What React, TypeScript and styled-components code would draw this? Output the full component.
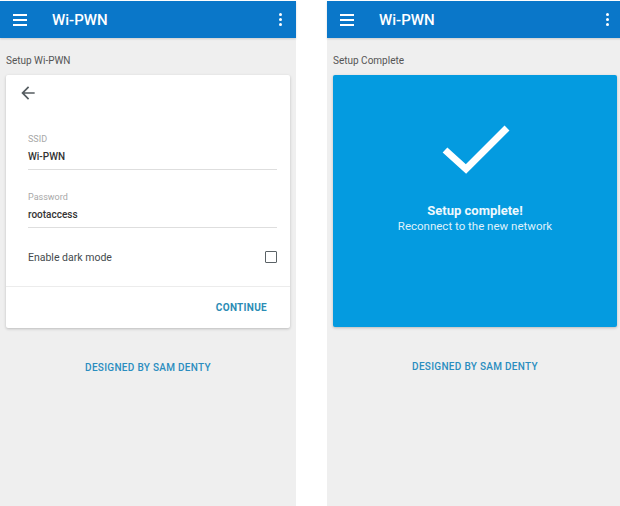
import React from 'react'
import styled, { createGlobalStyle } from 'styled-components'

const GlobalStyle = createGlobalStyle`
  html, body {
    margin: 0;
    padding: 0;
    background: #ffffff;
  }
  body {
    font-family: Roboto, 'Liberation Sans', sans-serif;
  }
`

function AppBar() {
  return (
    <Bar>
      <Hamburger>
        <span />
        <span />
        <span />
      </Hamburger>
      <BarTitle>Wi-PWN</BarTitle>
      <Kebab>
        <span />
        <span />
        <span />
      </Kebab>
    </Bar>
  )
}

function App() {
  return (
    <Screen>
      <GlobalStyle />
      <Phone>
        <AppBar />
        <Content>
          <SectionTitle>Setup Wi-PWN</SectionTitle>
          <Card>
            <BackRow>
              <svg width="20" height="20" viewBox="0 0 24 24">
                <path
                  fill="#555c60"
                  d="M20 11H7.83l5.59-5.59L12 4l-8 8 8 8 1.41-1.41L7.83 13H20v-2z"
                />
              </svg>
            </BackRow>
            <Fields>
              <Field>
                <FieldLabel>SSID</FieldLabel>
                <FieldValue>Wi-PWN</FieldValue>
              </Field>
              <Field $gap={21}>
                <FieldLabel>Password</FieldLabel>
                <FieldValue>rootaccess</FieldValue>
              </Field>
              <ToggleRow>
                <span>Enable dark mode</span>
                <Checkbox />
              </ToggleRow>
            </Fields>
            <CardFooter>
              <TextButton>CONTINUE</TextButton>
            </CardFooter>
          </Card>
          <Credit>DESIGNED BY SAM DENTY</Credit>
        </Content>
      </Phone>

      <Phone>
        <AppBar />
        <Content>
          <SectionTitle>Setup Complete</SectionTitle>
          <DoneCard>
            <svg width="70" height="52" viewBox="0 0 70 52">
              <polyline
                points="4,27 25,46 66,5"
                fill="none"
                stroke="#ffffff"
                strokeWidth="7"
              />
            </svg>
            <DoneTitle>Setup complete!</DoneTitle>
            <DoneText>Reconnect to the new network</DoneText>
          </DoneCard>
          <Credit>DESIGNED BY SAM DENTY</Credit>
        </Content>
      </Phone>
    </Screen>
  )
}

export default App

const Screen = styled.div`
  width: 620px;
  height: 506px;
  overflow: hidden;
  display: flex;
  gap: 31px;
  padding-top: 1px;
  box-sizing: border-box;
`

const Phone = styled.div`
  flex: 0 0 296px;
  height: 100%;
  background: #efefef;
  display: flex;
  flex-direction: column;
`

const Bar = styled.div`
  height: 37px;
  background: #0a77c9;
  display: flex;
  align-items: center;
  padding: 0 14px 0 13px;
  box-shadow: 0 1px 2px rgba(0, 0, 0, 0.15);
`

const Hamburger = styled.div`
  width: 14px;
  display: flex;
  flex-direction: column;
  gap: 3px;

  span {
    height: 2px;
    background: #ffffff;
  }
`

const BarTitle = styled.div`
  margin-left: 25px;
  flex: 1;
  color: #ffffff;
  font-size: 15px;
  font-weight: 500;
`

const Kebab = styled.div`
  width: 4px;
  display: flex;
  flex-direction: column;
  align-items: center;
  gap: 2px;

  span {
    width: 3px;
    height: 3px;
    border-radius: 50%;
    background: #ffffff;
  }
`

const Content = styled.div`
  padding: 0 6px;
  display: flex;
  flex-direction: column;
`

const SectionTitle = styled.div`
  margin-top: 16px;
  height: 21px;
  font-size: 10px;
  line-height: 13px;
  color: #555555;
`

const Card = styled.div`
  background: #ffffff;
  border-radius: 2px;
  box-shadow: 0 1px 3px rgba(0, 0, 0, 0.22);
  display: flex;
  flex-direction: column;
`

const BackRow = styled.div`
  height: 20px;
  padding: 8px 0 0 12px;
  display: flex;
`

const Fields = styled.div`
  padding: 30px 13px 22px 22px;
  border-bottom: 1px solid #ececec;
`

const Field = styled.div<{ $gap?: number }>`
  margin-top: ${p => p.$gap ?? 0}px;
  padding-bottom: 5px;
  border-bottom: 1px solid #dedede;
`

const FieldLabel = styled.div`
  font-size: 9px;
  line-height: 12px;
  color: #a8a8a8;
  margin-bottom: 5px;
`

const FieldValue = styled.div`
  font-size: 10px;
  line-height: 14px;
  color: #333333;
  font-weight: 500;
`

const ToggleRow = styled.div`
  margin-top: 22px;
  height: 14px;
  display: flex;
  align-items: center;
  justify-content: space-between;
  font-size: 10.5px;
  color: #444a4e;
`

const Checkbox = styled.div`
  width: 10px;
  height: 10px;
  border: 1.5px solid #5a6266;
  border-radius: 1px;
`

const CardFooter = styled.div`
  height: 41px;
  display: flex;
  align-items: center;
  justify-content: flex-end;
  padding-right: 23px;
`

const TextButton = styled.div`
  font-size: 10px;
  font-weight: 700;
  letter-spacing: 0.3px;
  color: #2b8cb5;
`

const DoneCard = styled.div`
  height: 252px;
  background: #049be0;
  border-radius: 2px;
  box-shadow: 0 1px 3px rgba(0, 0, 0, 0.22);
  display: flex;
  flex-direction: column;
  align-items: center;
  padding-top: 48px;
  box-sizing: border-box;
  color: #ffffff;

  svg {
    margin-left: 2px;
  }
`

const DoneTitle = styled.div`
  margin-top: 28px;
  font-size: 13px;
  line-height: 16px;
  font-weight: 700;
  color: #eef8fd;
`

const DoneText = styled.div`
  font-size: 11.5px;
  line-height: 15px;
  color: #dff1fb;
`

const Credit = styled.div`
  margin-top: 33px;
  text-align: center;
  font-size: 10px;
  line-height: 14px;
  font-weight: 500;
  letter-spacing: 0.3px;
  color: #2a8dbf;
`
